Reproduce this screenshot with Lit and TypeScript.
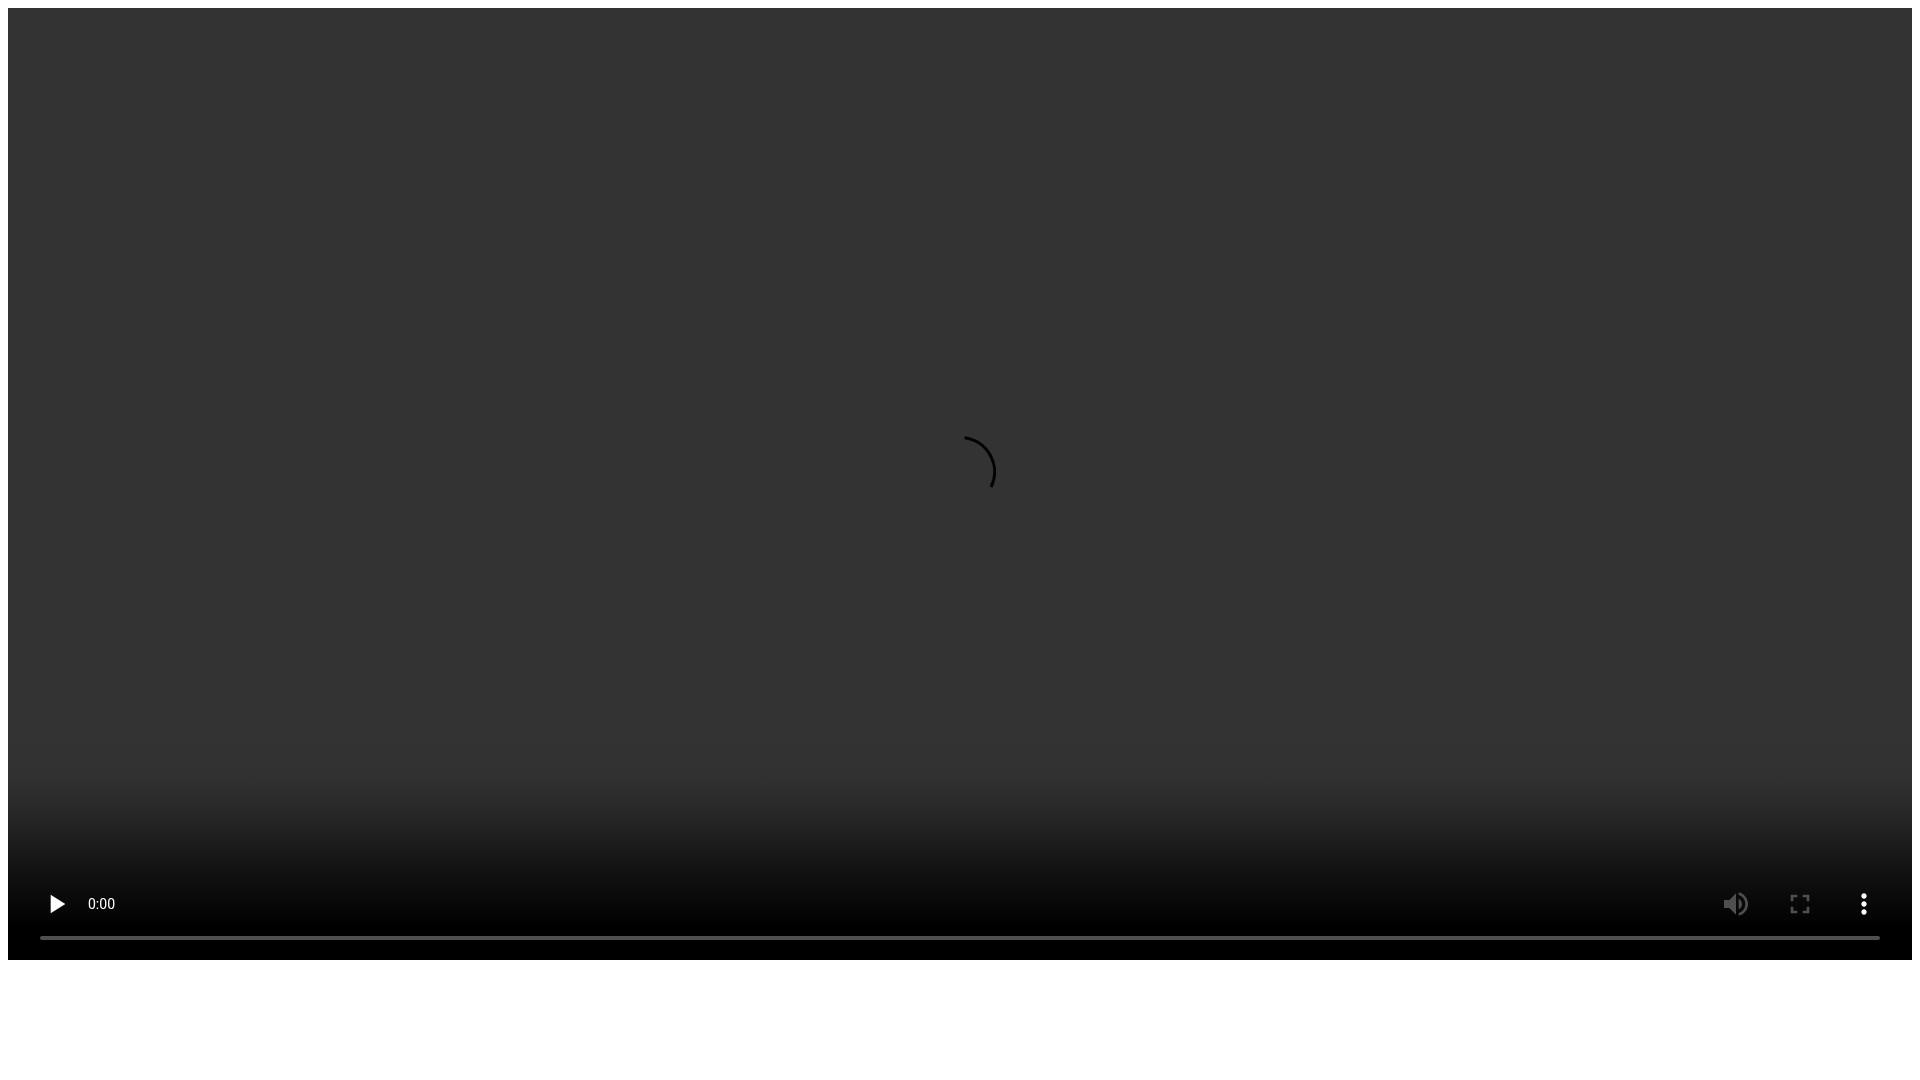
import { LitElement, html, css, svg } from "lit";
import { customElement, property } from "lit/decorators.js";

const ICONS = {
  play: svg`<path d="M8 5v14l11-7z"></path>`,
  volume: svg`<path d="M3 9v6h4l5 5V4L7 9H3zm13.5 3c0-1.77-1.02-3.29-2.5-4.03v8.05c1.48-.73 2.5-2.25 2.5-4.02zM14 3.23v2.06c2.89.86 5 3.54 5 6.71s-2.11 5.85-5 6.71v2.06c4.01-.91 7-4.49 7-8.77s-2.99-7.86-7-8.77z"></path>`,
  fullscreen: svg`<path d="M7 14H5v5h5v-2H7v-3zm-2-4h2V7h3V5H5v5zm12 7h-3v2h5v-5h-2v3zM14 5v2h3v3h2V5h-5z"></path>`,
  more: svg`<path d="M12 8c1.1 0 2-.9 2-2s-.9-2-2-2-2 .9-2 2 .9 2 2 2zm0 2c-1.1 0-2 .9-2 2s.9 2 2 2 2-.9 2-2-.9-2-2-2zm0 6c-1.1 0-2 .9-2 2s.9 2 2 2 2-.9 2-2-.9-2-2-2z"></path>`,
};

@customElement("media-button")
class MediaButton extends LitElement {
  @property() icon: keyof typeof ICONS = "play";
  @property() label = "";
  @property({ type: Boolean }) disabled = false;

  static styles = css`
    :host {
      display: block;
    }
    .button {
      display: grid;
      place-items: center;
      width: 48px;
      height: 48px;
      padding: 0;
      border: 0;
      background: none;
      color: #fff;
      cursor: pointer;
    }
    .button:disabled {
      color: #4f4f4f;
      cursor: default;
    }
    .icon {
      width: 32px;
      height: 32px;
      fill: currentColor;
    }
  `;

  render() {
    return html`<button class="button" type="button" aria-label=${this.label} ?disabled=${this.disabled}>
      <svg class="icon" viewBox="0 0 24 24" aria-hidden="true">${ICONS[this.icon]}</svg>
    </button>`;
  }
}

@customElement("app-root")
class AppRoot extends LitElement {
  static styles = css`
    :host {
      display: block;
      padding: 8px;
      background: #fff;
      font-family: Roboto, "Liberation Sans", sans-serif;
    }
    .player {
      display: flex;
      flex-direction: column;
      aspect-ratio: 2 / 1;
      background:
        linear-gradient(
            to top,
            #000 0,
            #000 32px,
            #040404 44px,
            #0a0a0a 64px,
            #101010 84px,
            #161616 100px,
            #1e1e1e 120px,
            #252525 140px,
            #2b2b2b 160px,
            #303030 180px,
            #323232 200px,
            #333 224px
          )
          bottom / 100% 224px no-repeat,
        #333;
    }
    .stage {
      flex: 1;
      display: grid;
      place-items: center;
      padding-top: 56px;
    }
    .spinner {
      width: 72px;
      height: 72px;
      fill: none;
      stroke: #000;
      stroke-width: 3;
    }
    .controls {
      display: flex;
      align-items: center;
      padding: 0 24px;
    }
    .time {
      flex: 1;
      padding-left: 8px;
      color: #fff;
      font-size: 14px;
      line-height: 48px;
      will-change: opacity;
    }
    .actions {
      display: flex;
      gap: 16px;
    }
    .timeline {
      appearance: none;
      display: block;
      height: 4px;
      margin: 8px 32px 20px;
      border-radius: 2px;
      background: #4f4f4f;
    }
    .timeline::-webkit-slider-thumb {
      appearance: none;
      width: 0;
      height: 0;
    }
  `;

  render() {
    return html`<main class="player">
      <div class="stage">
        <svg class="spinner" viewBox="0 0 72 72" role="img" aria-label="Loading">
          <path d="M40.6 1.8A34.5 34.5 0 0 1 67.1 51.2"></path>
        </svg>
      </div>
      <div class="controls">
        <media-button icon="play" label="Play"></media-button>
        <span class="time">0:00</span>
        <div class="actions">
          <media-button icon="volume" label="Mute" disabled></media-button>
          <media-button icon="fullscreen" label="Full screen" disabled></media-button>
          <media-button icon="more" label="More options"></media-button>
        </div>
      </div>
      <input class="timeline" type="range" min="0" max="100" value="0" aria-label="Playback position" />
    </main>`;
  }
}
